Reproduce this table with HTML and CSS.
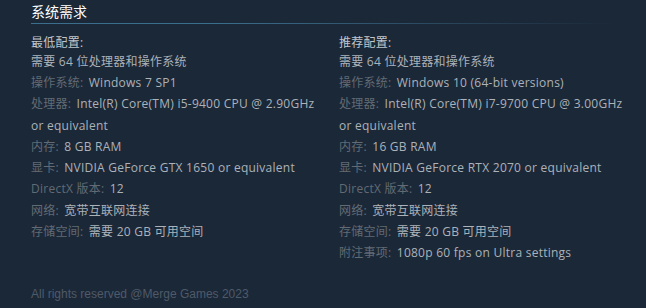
FILE: index.html
```html
<!DOCTYPE html>
<html lang="zh-CN">
<head>
<meta charset="utf-8">
<link rel="stylesheet" href="styles.css">
</head>
<body>
<div class="page">
  <h2 class="title">系统需求</h2>
  <div class="cols">
    <ul class="col">
      <li class="head">最低配置:</li>
      <li class="first">需要 64 位处理器和操作系统</li>
      <li><span class="k">操作系统:</span> Windows 7 SP1</li>
      <li><span class="k">处理器:</span> Intel(R) Core(TM) i5-9400 CPU @ 2.90GHz or equivalent</li>
      <li><span class="k">内存:</span> 8 GB RAM</li>
      <li><span class="k">显卡:</span> NVIDIA GeForce GTX 1650 or equivalent</li>
      <li><span class="k">DirectX 版本:</span> 12</li>
      <li><span class="k">网络:</span> 宽带互联网连接</li>
      <li><span class="k">存储空间:</span> 需要 20 GB 可用空间</li>
    </ul>
    <ul class="col">
      <li class="head">推荐配置:</li>
      <li class="first">需要 64 位处理器和操作系统</li>
      <li><span class="k">操作系统:</span> Windows 10 (64-bit versions)</li>
      <li><span class="k">处理器:</span> Intel(R) Core(TM) i7-9700 CPU @ 3.00GHz or equivalent</li>
      <li><span class="k">内存:</span> 16 GB RAM</li>
      <li><span class="k">显卡:</span> NVIDIA GeForce RTX 2070 or equivalent</li>
      <li><span class="k">DirectX 版本:</span> 12</li>
      <li><span class="k">网络:</span> 宽带互联网连接</li>
      <li><span class="k">存储空间:</span> 需要 20 GB 可用空间</li>
      <li><span class="k">附注事项:</span> 1080p 60 fps on Ultra settings</li>
    </ul>
  </div>
  <p class="footer">All rights reserved @Merge Games 2023</p>
</div>
</body>
</html>
```
FILE: styles.css
```css
html, body {
  margin: 0;
  padding: 0;
  background: #1b2838;
  width: 646px;
  height: 308px;
  overflow: hidden;
}
.page {
  padding-left: 31px;
  font-family: "Open Sans", "Noto Sans CJK SC", sans-serif;
  font-size: 12px;
  letter-spacing: 0.25px;
  color: #acb2b8;
}
.title {
  margin: 0;
  padding-top: 2px;
  height: 21px;
  font-family: "Noto Sans CJK SC", sans-serif;
  font-size: 14px;
  font-weight: normal;
  letter-spacing: 0;
  color: #ffffff;
  line-height: 18px;
  border-bottom: 1px solid transparent;
  border-image: linear-gradient(to right, #3b6e8c 0%, #3b6e8c 30%, rgba(59,110,140,0) 95%) 1;
}
.cols {
  display: grid;
  grid-template-columns: 308px 300px;
  margin-top: 9px;
}
.col {
  list-style: none;
  margin: 0;
  padding: 0;
  width: 292px;
}
.col li {
  line-height: 21.3px;
}
.col li.head {
  line-height: 19px;
  color: #c0c6cc;
}
.col li.first {
  line-height: 20px;
}
.k {
  color: #626b74;
  margin-right: 2px;
}
.footer {
  margin: 0;
  position: absolute;
  top: 287px;
  left: 31px;
  font-family: "Liberation Sans", Arial, sans-serif;
  font-size: 12px;
  letter-spacing: 0;
  color: #4f5a68;
}
```
